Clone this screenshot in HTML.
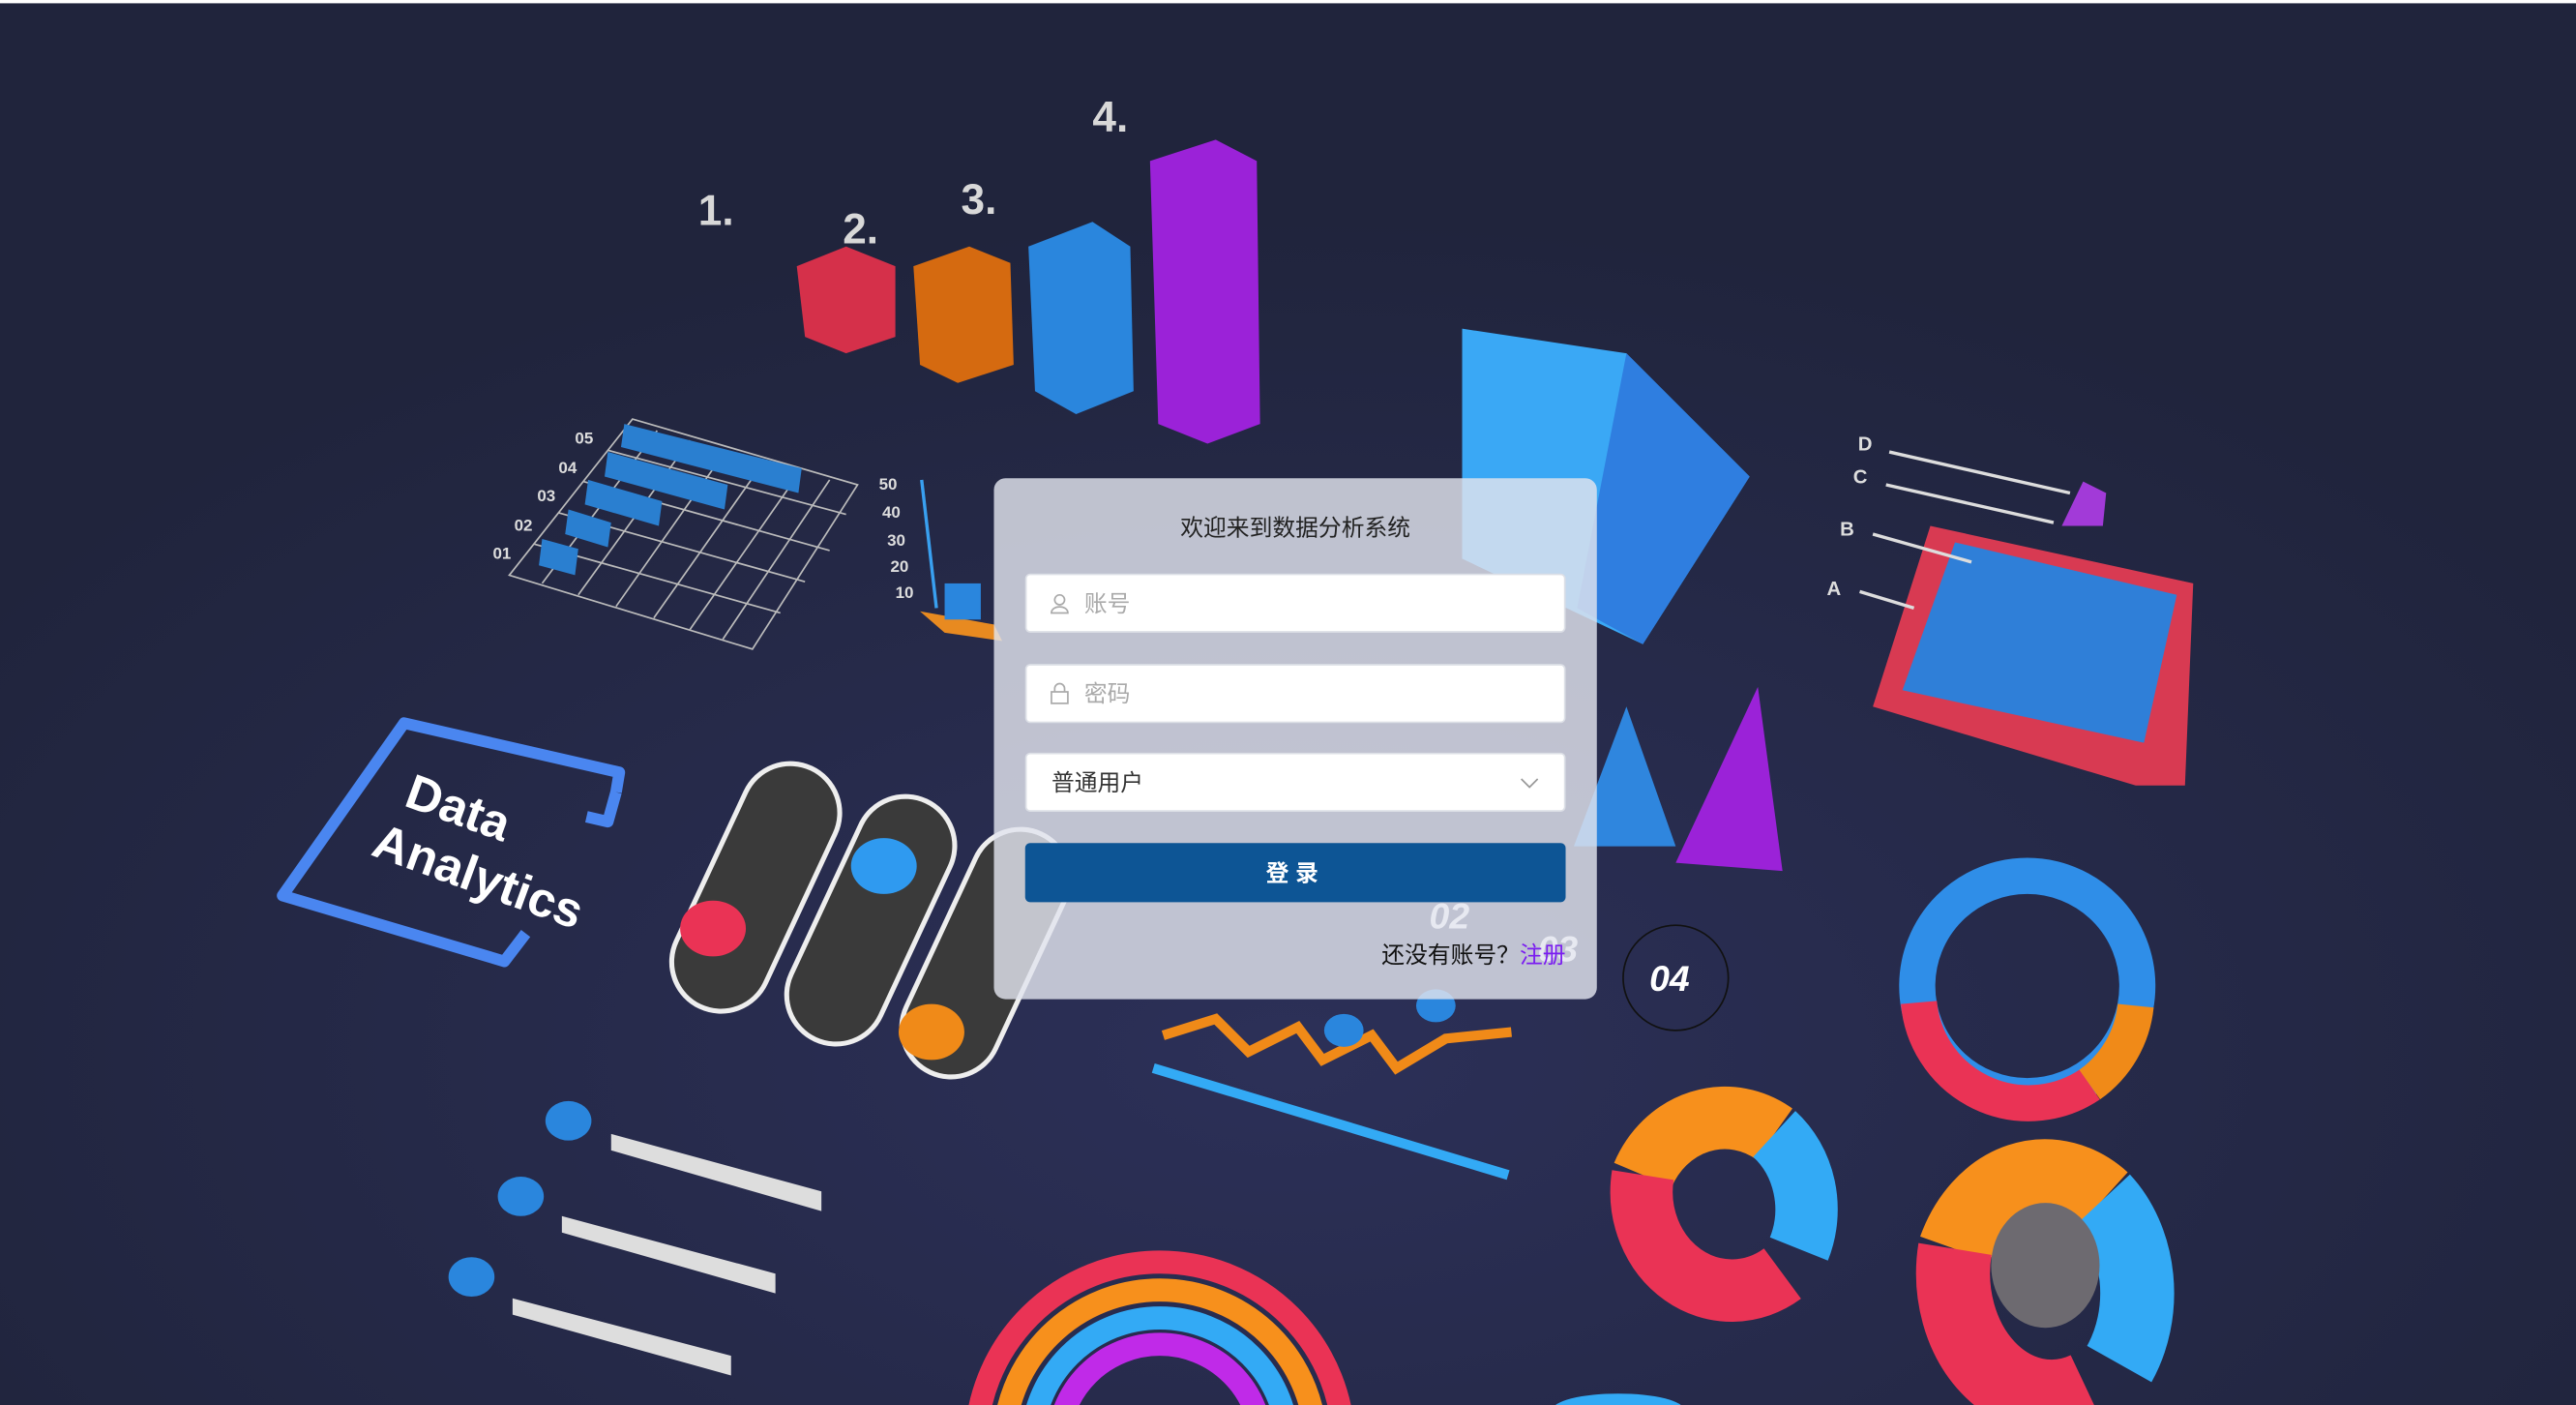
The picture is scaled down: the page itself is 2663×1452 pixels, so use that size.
<!DOCTYPE html>
<html><head><meta charset="utf-8"><style>
html,body{margin:0;padding:0;width:2663px;height:1452px;overflow:hidden;background:#22263f;}
#stage{position:absolute;left:0;top:0;width:1568px;height:855px;overflow:hidden;transform:scale(1.69834);transform-origin:0 0;font-family:"Liberation Sans","Noto Sans CJK SC",sans-serif;}
svg{position:absolute;left:0;top:0}
.box{position:absolute;left:605px;top:291px;width:367px;height:317px;border-radius:7px;background:rgba(226,228,238,0.82);}
.title{position:absolute;left:0;right:0;top:20px;text-align:center;font-size:14px;color:#222;}
.inp{position:absolute;left:19px;width:329px;height:36px;background:#fff;border:1px solid #dcdfe6;border-radius:3px;box-sizing:border-box;font-size:14px;color:#aaa;line-height:34px;}
.inp span{position:absolute;left:35px}
.btn{position:absolute;left:19px;top:222px;width:329px;height:36px;background:#0d5595;border-radius:3px;color:#fff;text-align:center;line-height:36px;font-size:14px;font-weight:bold;letter-spacing:4px;}
.reg{position:absolute;right:19px;top:280px;font-size:14px;color:#111;}
.reg b{font-weight:normal;color:#7a1cf0}
</style></head><body><div id="stage">
<svg width="1568" height="855" viewBox="0 0 1568 855">
<defs><radialGradient id="g" cx="0.5" cy="0.75" r="0.6"><stop offset="0" stop-color="#2c3058"/><stop offset="1" stop-color="#20243c"/></radialGradient></defs>
<rect width="1568" height="855" fill="url(#g)"/>
<rect width="1568" height="2" fill="#fff"/>
<g fill="#d8d8d8" font-size="26" font-weight="bold"><text x="425" y="137">1.</text><text x="513" y="148">2.</text><text x="585" y="130">3.</text><text x="665" y="80">4.</text></g>
<polygon points="485,162 515,150 545,162 545,205 515,215 490,205" fill="#d5304a"/>
<polygon points="556,162 590,150 615,160 617,222 583,233 560,222" fill="#d56a10"/>
<polygon points="626,150 665,135 688,150 690,238 655,252 630,238" fill="#2a86dd"/>
<polygon points="700,98 740,85 765,98 767,258 735,270 705,258" fill="#9b22d8"/>
<g stroke="#bbb" stroke-width="1" fill="none"><polygon points="310,350 385,255 522,295 458,395"/>
<path d="M325,331 L475,373 M340,312 L490,354 M355,293 L505,335 M370,274 L515,313 M330,355 L400,262 M352,362 L420,268 M375,369 L442,274 M398,376 L465,281 M420,383 L487,287 M440,389 L505,292"/></g>
<g fill="#2a7fd0"><polygon points="380,258 488,285 486,300 378,272"/><polygon points="370,275 443,295 441,310 368,290"/><polygon points="358,292 403,305 401,320 356,307"/><polygon points="346,310 372,318 370,333 344,325"/><polygon points="330,328 352,334 350,350 328,344"/></g>
<g fill="#ddd" font-size="10" font-weight="bold"><text x="350" y="270">05</text><text x="340" y="288">04</text><text x="327" y="305">03</text><text x="313" y="323">02</text><text x="300" y="340">01</text><text x="535" y="298">50</text><text x="537" y="315">40</text><text x="540" y="332">30</text><text x="542" y="348">20</text><text x="545" y="364">10</text></g>
<line x1="561" y1="292" x2="570" y2="370" stroke="#39a0f0" stroke-width="2"/>
<polygon points="560,372 575,385 610,390 605,380" fill="#e88a20"/>
<rect x="575" y="355" width="22" height="22" fill="#2a86dd"/>
<polygon points="890,200 990,215 1065,290 1000,392 890,340" fill="#3aa8f5"/>
<polygon points="990,215 1065,290 1000,392 960,370" fill="#2f7ee0"/>
<polygon points="1140,430 1175,320 1335,355 1330,478 1300,478" fill="#d83a52"/>
<polygon points="1158,420 1190,330 1325,362 1305,452" fill="#2f7fd8"/>
<polygon points="1268,293 1282,300 1280,320 1255,320" fill="#a23ad8"/>
<g stroke="#ddd" stroke-width="2"><line x1="1150" y1="275" x2="1260" y2="300"/><line x1="1148" y1="295" x2="1250" y2="318"/><line x1="1140" y1="325" x2="1200" y2="342"/><line x1="1132" y1="360" x2="1165" y2="370"/></g>
<g fill="#ddd" font-size="12" font-weight="bold"><text x="1131" y="274">D</text><text x="1128" y="294">C</text><text x="1120" y="326">B</text><text x="1112" y="362">A</text></g>
<polygon points="990,430 1020,515 958,515" fill="#2f86de"/>
<polygon points="1070,418 1085,530 1020,525" fill="#9b22d8"/>
<path d="M375,482 L370,500 L357,497 M320,568 L307,585 L172,545 L246,440 L377,470 L375,482" fill="none" stroke="#4a86f0" stroke-width="7" stroke-linejoin="round"/>
<text x="245" y="490" fill="#fff" font-size="30" font-weight="bold" transform="rotate(20 245 490)">Data</text>
<text x="225" y="520" fill="#fff" font-size="30" font-weight="bold" transform="rotate(20 225 520)">Analytics</text>
<g stroke="#eee" stroke-width="3" fill="#3a3a3a"><rect x="430" y="460" width="60" height="160" rx="30" transform="rotate(25 460 540)"/><rect x="500" y="480" width="60" height="160" rx="30" transform="rotate(25 530 560)"/><rect x="570" y="500" width="60" height="160" rx="30" transform="rotate(25 600 580)"/></g>
<ellipse cx="434" cy="565" rx="20" ry="17" fill="#ea3355"/><ellipse cx="538" cy="527" rx="20" ry="17" fill="#2f9af0"/><ellipse cx="567" cy="628" rx="20" ry="17" fill="#f08a18"/>
<polyline points="708,630 740,620 760,640 790,625 805,645 835,630 850,650 880,632 920,628" fill="none" stroke="#f08a18" stroke-width="6"/>
<line x1="702" y1="650" x2="918" y2="715" stroke="#33aaf5" stroke-width="6"/>
<ellipse cx="818" cy="627" rx="12" ry="10" fill="#2a86dd"/><ellipse cx="874" cy="612" rx="12" ry="10" fill="#2a86dd"/>
<g fill="#fff" font-size="22" font-weight="bold" font-style="italic"><text x="870" y="565">02</text><text x="936" y="585">03</text><text x="1004" y="603">04</text></g>
<circle cx="1020" cy="595" r="32" fill="none" stroke="#111" stroke-width="1"/>
<g fill="#ddd"><polygon points="372,690 500,725 500,737 372,700"/><polygon points="342,740 472,775 472,787 342,750"/><polygon points="312,790 445,825 445,837 312,800"/></g>
<g fill="#2a86dd"><ellipse cx="346" cy="682" rx="14" ry="12"/><ellipse cx="317" cy="728" rx="14" ry="12"/><ellipse cx="287" cy="777" rx="14" ry="12"/></g>
<g fill="none" stroke-width="22"><circle cx="1234" cy="600" r="67" stroke="#2f8ee8"/><path d="M1168,610 A67,67 0 0 0 1272,660" stroke="#ea3355"/><path d="M1272,660 A67,67 0 0 0 1300,612" stroke="#f08a18"/></g>
<g fill="none" stroke-width="38"><path d="M1000,715 A55,60 0 0 1 1080,690" stroke="#f7901c"/><path d="M1000,715 A55,60 0 0 0 1085,775" stroke="#ea3355"/><path d="M1080,690 A55,60 0 0 1 1095,760" stroke="#33aaf5"/></g>
<g fill="none" stroke-width="45"><path d="M1190,760 A60,75 0 0 1 1280,730" stroke="#f7901c"/><path d="M1190,760 A60,75 0 0 0 1270,845" stroke="#ea3355"/><path d="M1280,730 A60,75 0 0 1 1290,830" stroke="#33aaf5"/></g>
<ellipse cx="1245" cy="770" rx="33" ry="38" fill="#6d6a70"/>
<g fill="none" stroke-width="14"><circle cx="706" cy="880" r="112" stroke="#ea3355"/><circle cx="706" cy="880" r="95" stroke="#f7901c"/><circle cx="706" cy="880" r="78" stroke="#33aaf5"/><circle cx="706" cy="880" r="62" stroke="#c02ae8"/></g>
<ellipse cx="985" cy="858" rx="40" ry="10" fill="#33aaf5"/>
</svg>
<div class="box">
<div class="title">欢迎来到数据分析系统</div>
<div class="inp" style="top:58px"><svg width="14" height="14" viewBox="0 0 14 14" style="left:13px;top:10px"><circle cx="7" cy="5" r="3" fill="none" stroke="#aaa"/><path d="M2 13 C2 8 12 8 12 13 Z" fill="none" stroke="#aaa"/></svg><span>账号</span></div>
<div class="inp" style="top:113px"><svg width="14" height="14" viewBox="0 0 14 14" style="left:13px;top:10px"><rect x="2" y="6" width="10" height="7" fill="none" stroke="#aaa"/><path d="M4 6 V4 a3 3 0 0 1 6 0 V6" fill="none" stroke="#aaa"/></svg><span>密码</span></div>
<div class="inp" style="top:167px;color:#333"><span style="left:15px">普通用户</span><svg width="12" height="8" viewBox="0 0 12 8" style="left:300px;top:14px"><path d="M1 1 L6 6 L11 1" fill="none" stroke="#999"/></svg></div>
<div class="btn">登录</div>
<div class="reg">还没有账号？<b>注册</b></div>
</div>
</div></body></html>
